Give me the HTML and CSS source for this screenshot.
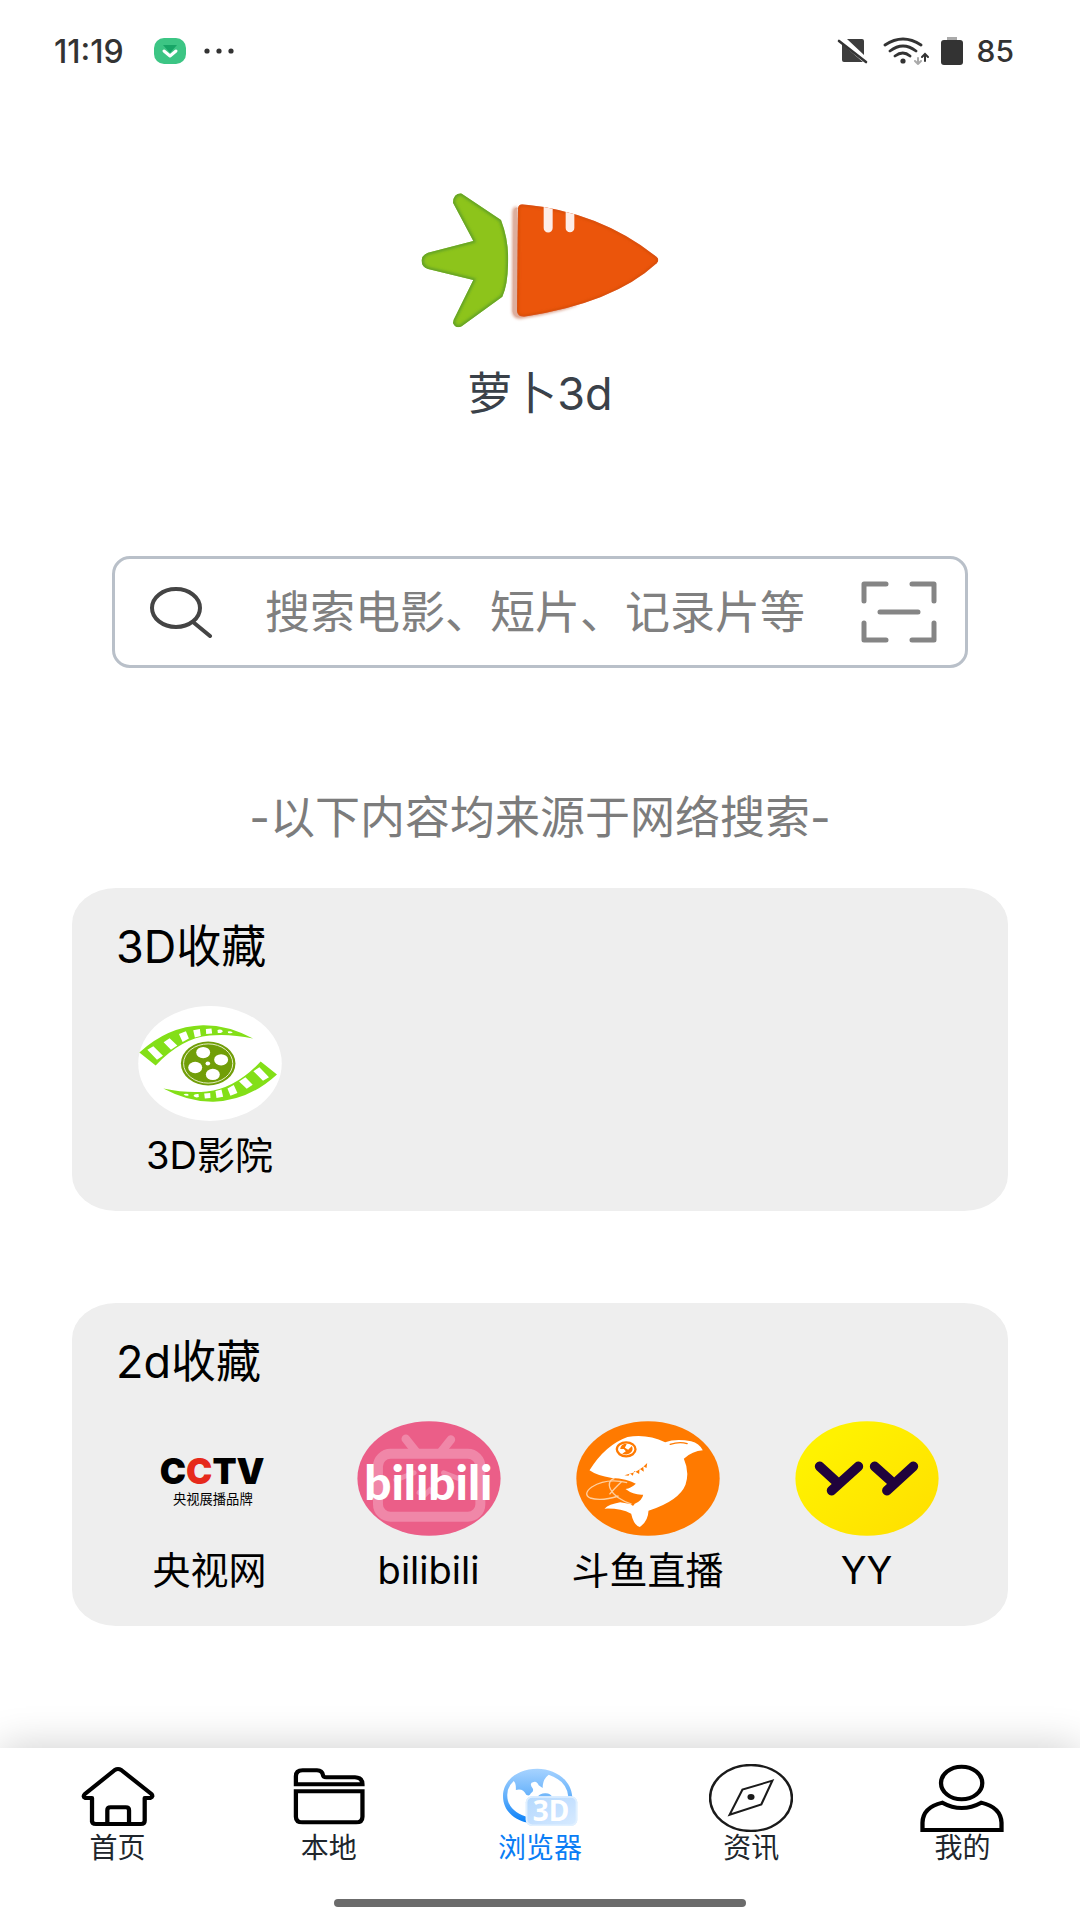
FILE: index.html
```html
<!DOCTYPE html>
<html lang="zh-CN">
<head>
  <meta charset="UTF-8" />
  <meta name="viewport" content="width=device-width, initial-scale=1.0"/>
  <title>萝卜3d</title>
  <link rel="stylesheet" href="styles.css">
</head>
<body>
  <header class="status-bar">
    <span class="clock">11:19</span>
    <svg class="msg-icon" width="32" height="26" viewBox="0 0 32 26" aria-hidden="true">
      <rect width="32" height="26" rx="10" fill="#3cc584"/>
      <path d="M9 7h14l-7 8z" fill="#17a566"/>
      <path d="M10 13l6 5 6-5" fill="none" stroke="#fff" stroke-width="3" stroke-linecap="round" stroke-linejoin="round"/>
    </svg>
    <svg class="dots-icon" width="30" height="6" viewBox="0 0 30 6" fill="#333" aria-hidden="true">
      <circle cx="3" cy="3" r="2.6"/><circle cx="15" cy="3" r="2.6"/><circle cx="27" cy="3" r="2.6"/>
    </svg>
    <div class="status-right">
      <svg width="32" height="26" viewBox="0 0 32 26" aria-hidden="true">
        <path d="M10 1h15a2 2 0 0 1 2 2v14zM5 6l21 18H7a2 2 0 0 1-2-2z" fill="#3d3d3d"/>
        <path d="M2 3l27 21" stroke="#333" stroke-width="2.6" stroke-linecap="round"/>
      </svg>
      <svg class="wifi-icon" width="48" height="28" viewBox="0 0 48 28" fill="none" stroke="#333" stroke-width="2.8" stroke-linecap="round" aria-hidden="true">
        <path d="M2 8Q20-4 38 8M7 14Q20 4 33 14M12 19Q20 13 27 19"/>
        <circle cx="20" cy="24" r="2.6" fill="#333" stroke="none"/>
        <path d="M35 21v6M32 24l3 3 3-3" stroke="#aaa" stroke-width="2"/>
        <path d="M42 24v-6M39 20l3-3 3 3" stroke-width="2"/>
      </svg>
      <svg class="battery-icon" width="22" height="28" viewBox="0 0 22 28" aria-hidden="true">
        <path d="M6 0h10v4H6z" fill="#aaa"/>
        <rect y="3" width="22" height="25" rx="3" fill="#333"/>
      </svg>
      <span>85</span>
    </div>
  </header>

  <main>
    <section class="brand">
      <svg width="240" height="140" viewBox="60 60 720 420" aria-hidden="true">
        <defs>
          <filter id="soft" x="-10%" y="-10%" width="120%" height="120%"><feGaussianBlur stdDeviation="4"/></filter>
          <clipPath id="leafClip"><path d="M183 70L303 150Q328 215 324 285Q323 345 307 380L185 469Q168 478 159 459L161 449L220 330L84 297Q64 290 65 270Q67 254 84 248L220 213L159 98Q160 71 183 70Z"/></clipPath>
          <clipPath id="rootClip"><path d="M367 103Q600 125 770 261Q780 270 770 280Q640 400 372 440Q352 440 351 423L354 115Q356 103 367 103Z"/></clipPath>
        </defs>
        <g clip-path="url(#leafClip)">
          <path d="M60 60h280v420H60z" fill="#8dc41b"/>
          <path d="M183 70L303 150Q328 215 324 285Q323 345 307 380L185 469Q168 478 159 459L161 449L220 330L84 297Q64 290 65 270Q67 254 84 248L220 213L159 98Q160 71 183 70Z" fill="none" stroke="#5d9d26" stroke-width="11" filter="url(#soft)"/>
        </g>
        <path d="M350 109Q336 112 337 130L336 425Q339 447 361 446Q480 428 540 403L360 420Z" fill="#d9a08c" filter="url(#soft)"/>
        <path d="M352 112Q341 114 342 130L338 425Q341 440 360 441Z" fill="#dcae9e"/>
        <g clip-path="url(#rootClip)">
          <path d="M340 90h450v360H340z" fill="#eb550b"/>
          <path d="M367 103Q600 125 770 261Q780 270 770 280Q640 400 372 440Q352 440 351 423L354 115Q356 103 367 103Z" fill="none" stroke="#cc4a0d" stroke-width="7" filter="url(#soft)"/>
          <path d="M431 90v84a13 13 0 0 0 27 0V90zM497 90v84a13 13 0 0 0 26 0V90z" fill="#fdede8"/>
        </g>
      </svg>
      <h1>萝卜3d</h1>
    </section>

    <form class="search" role="search">
      <button type="submit" aria-label="搜索">
        <svg width="64" height="52" viewBox="0 0 64 52" fill="none" stroke="#444" stroke-width="4" stroke-linecap="round" aria-hidden="true">
          <ellipse cx="27" cy="22" rx="24" ry="19"/>
          <path d="M44 36l17 14"/>
        </svg>
      </button>
      <input type="text" aria-label="搜索内容" placeholder="搜索电影、短片、记录片等">
      <button type="button" aria-label="扫一扫">
        <svg width="76" height="62" viewBox="0 0 76 62" fill="none" stroke="#858585" stroke-width="5" stroke-linecap="round" stroke-linejoin="round" aria-hidden="true">
          <path d="M3 20V3h22M51 3h22v17M3 42v17h22M51 59h22V42M19 31h38" />
        </svg>
      </button>
    </form>

    <p class="notice">-以下内容均来源于网络搜索-</p>

    <section class="card">
      <h2>3D收藏</h2>
      <div class="sites">
        <a href="#">
          <svg width="144" height="115" viewBox="235 379 433 346" aria-hidden="true">
            <ellipse cx="451.500" cy="552" rx="216" ry="173" fill="#fff"/>
            <g id="film">
              <path d="M239 519Q325 440 430 437Q505 436 581 477Q510 462 450 468Q365 476 288 558Z" fill="#83df17"/>
              <path d="M263 511l18-11 29 29-18 12zM312 488l18-12 23 22-19 13zM358 463l21-8 9 22-19 10zM401 452l20-4 3 21-18 5zM439 448l17-1 2 15-18 1zM474 451q10-3 16 3q-1 7-15 6zM505 456q8-3 15 3q-5 4-14 1z" fill="#fff"/>
            </g>
            <use href="#film" transform="rotate(180 446 552)"/>
            <ellipse cx="446" cy="552" rx="82" ry="66" fill="#719e08"/>
            <ellipse cx="446" cy="552" rx="74" ry="59" fill="#719e08" stroke="#e6efc9" stroke-width="3"/>
            <g fill="#fff">
              <ellipse cx="431" cy="519" rx="21" ry="17"/><ellipse cx="485" cy="541" rx="21" ry="17"/>
              <ellipse cx="407" cy="564" rx="21" ry="17"/><ellipse cx="460" cy="585" rx="21" ry="17"/>
              <ellipse cx="445" cy="552" rx="7" ry="6"/>
            </g>
          </svg>
          <span>3D影院</span>
        </a>
      </div>
    </section>

    <section class="card">
      <h2>2d收藏</h2>
      <div class="sites">
        <a href="#">
          <svg width="144" height="115" viewBox="245 395 433 346" aria-hidden="true">
            <text class="cctv" x="468" y="586">C<tspan fill="#e62a1c">C</tspan>TV</text>
            <text class="cctv-sub" x="470" y="646">央视展播品牌</text>
          </svg>
          <span>央视网</span>
        </a>
        <a href="#">
          <svg width="144" height="115" viewBox="43 64 434 347" aria-hidden="true">
            <ellipse cx="260" cy="237.500" rx="216" ry="173" fill="#eb5e88"/>
            <g fill="none" stroke="#f087a8" stroke-linecap="round">
              <path d="M190 118l30 38M326 120l-30 38" stroke-width="26"/>
              <rect x="106" y="163" width="309" height="190" rx="38" stroke-width="30"/>
              <path d="M160 242l55-22M304 220l56 22M230 280l16 8 16-16 14 14" stroke-width="15"/>
            </g>
            <text class="bili" x="258" y="303">bilibili</text>
          </svg>
          <span>bilibili</span>
        </a>
        <a href="#">
          <svg width="144" height="115" viewBox="73 65 431 345" aria-hidden="true">
            <ellipse cx="288.500" cy="237.500" rx="215" ry="172" fill="#ff7a00"/>
            <path d="M113 213Q160 137 227 113Q285 102 340 129Q372 116 418 126Q442 132 453 153Q422 155 396 178Q414 218 401 256Q382 304 290 334Q289 365 264 383Q246 378 238 343Q205 326 158 328Q171 315 205 309Q227 314 246 315Q272 303 274 286Q246 288 221 269Q238 266 252 253Q225 238 180 236Q135 229 113 213Z" fill="#fff"/>
            <path d="M355 135Q383 126 406 133" fill="none" stroke="#ff7a00" stroke-width="4" stroke-linecap="round"/>
            <ellipse cx="223" cy="150" rx="28" ry="21" fill="none" stroke="#ff7a00" stroke-width="7"/>
            <path d="M205 149Q207 133 225 133L219 145L229 151L240 140Q247 153 234 162Q226 168 211 163L222 156L216 149Z" fill="#ff7a00"/>
            <path d="M218 228Q263 218 286 191L284 206L274 201L276 217L263 208L262 224L247 215L243 229L234 222L230 229Z" fill="#ff7a00"/>
            <g fill="none" stroke="#ffd0a0" stroke-width="4">
              <path d="M226 250Q165 235 120 263Q92 284 115 296Q148 307 200 290"/>
              <path d="M188 237Q165 245 176 270Q190 299 243 316M209 247Q185 270 173 285"/>
            </g>
            <circle cx="243" cy="315" r="4" fill="#ff7a00"/>
          </svg>
          <span>斗鱼直播</span>
        </a>
        <a href="#">
          <svg width="144" height="115" viewBox="43 64 434 347" aria-hidden="true">
            <defs><linearGradient id="sun" x1="0" y1="0" x2="1" y2="1"><stop offset=".2" stop-color="#fff200"/><stop offset="1" stop-color="#ffde00"/></linearGradient></defs>
            <ellipse cx="260" cy="237.500" rx="216" ry="173" fill="url(#sun)"/>
            <path d="M117 201l47 43M234 201l-81 73M283 201l48 43M400 201l-80 73" stroke="#20033c" stroke-width="29" stroke-linecap="round"/>
          </svg>
          <span>YY</span>
        </a>
      </div>
    </section>
  </main>

  <footer>
    <nav>
      <a href="#">
        <svg width="84" height="68" viewBox="97 100 236 204" preserveAspectRatio="none" fill="none" stroke="#000" stroke-width="12" stroke-linejoin="round" aria-hidden="true">
          <path d="M142 275V202H123Q115 198 122 190L206 118Q215 112 224 118L309 190Q315 198 306 202H290V270Q290 280 279 280H153Q142 280 142 270M185 280V239Q185 230 194 230H237Q246 230 246 239V280"/>
        </svg>
        <span>首页</span>
      </a>
      <a href="#">
        <svg width="84" height="68" viewBox="689 100 236 204" preserveAspectRatio="none" fill="none" stroke="#000" stroke-width="12" aria-hidden="true">
          <path d="M714 161V137Q714 119 733 119H773Q788 120 790 133Q791 140 799 140H880Q901 141 901 161ZM714 182H901V258Q901 275 883 275H733Q714 275 714 258Z"/>
        </svg>
        <span>本地</span>
      </a>
      <a href="#" class="active" aria-current="page">
        <svg width="84" height="68" viewBox="0 0 84 68" aria-hidden="true">
          <defs>
            <linearGradient id="sky" x1="0" y1="0" x2="0" y2="1"><stop offset="0" stop-color="#a7d3ff"/><stop offset=".5" stop-color="#67b2fb"/><stop offset="1" stop-color="#087ff8"/></linearGradient>
            <linearGradient id="badge" x1="0" y1="0" x2="1" y2="1"><stop offset="0" stop-color="#b5d9fd"/><stop offset=".5" stop-color="#c4e0ff"/><stop offset="1" stop-color="#d8ebff"/></linearGradient>
          </defs>
          <g transform="scale(.357 .333) translate(-1282 -100)">
            <path d="M1392 114C1338 114 1296 149 1296 196C1296 239 1326 268 1364 276L1360 258C1325 246 1307 222 1308 192Q1309 167 1326 151Q1333 158 1332 178Q1352 172 1361 192Q1371 198 1374 188Q1386 180 1376 168Q1370 156 1382 154Q1391 151 1396 164L1407 172Q1407 145 1424 132Q1475 151 1479 198H1490C1487 148 1442 114 1392 114Z" fill="url(#sky)"/>
            <path d="M1393 199Q1400 187 1416 188Q1429 189 1434 199Z" fill="#74b8fa"/>
            <rect x="1360" y="197" width="144" height="89" rx="18" fill="url(#badge)"/>
            <rect x="1362" y="199" width="140" height="85" rx="16" fill="none" stroke="#e0f0ff" stroke-width="5"/>
          </g>
          <text class="badge-text" x="53" y="57">3D</text>
        </svg>
        <span>浏览器</span>
      </a>
      <a href="#">
        <svg width="84" height="68" viewBox="642 100 236 204" preserveAspectRatio="none" fill="none" stroke="#1a1a1a" stroke-width="6" aria-hidden="true">
          <ellipse cx="760" cy="202" rx="115" ry="99" stroke-width="7"/>
          <path d="M820 150L736 177L700 252L789 221Z"/>
          <ellipse cx="760" cy="199" rx="10" ry="9" fill="#1a1a1a" stroke="none"/>
        </svg>
        <span>资讯</span>
      </a>
      <a href="#">
        <svg width="84" height="68" viewBox="1234 100 236 204" preserveAspectRatio="none" fill="none" stroke="#000" stroke-width="12" aria-hidden="true">
          <ellipse cx="1351" cy="157" rx="58" ry="49"/>
          <path d="M1241 298V276Q1242 230 1297 216Q1351 248 1406 216Q1461 230 1463 276V298Z"/>
        </svg>
        <span>我的</span>
      </a>
    </nav>
    <div class="home-bar"></div>
  </footer>
</body>
</html>
```
FILE: styles.css
```css
* {
  box-sizing: border-box;
}

body {
  font-family: Inter, "Noto Sans CJK SC", sans-serif;
  margin: 0;
  min-height: 100vh;
  display: flex;
  flex-direction: column;
  background: #fff;
  color: #000;
}

h1, h2, p {
  margin: 0;
  font-weight: 400;
  line-height: 60px;
}

a {
  color: inherit;
  text-decoration: none;
}

svg {
  display: block;
  flex-shrink: 0;
}

.status-bar {
  display: flex;
  align-items: center;
  height: 102px;
  padding: 0 66px 0 54px;
  color: #333;
  font-size: 30px;
  font-weight: 500;
}

.clock {
  font-size: 32px;
}

.msg-icon {
  margin-left: 30px;
}

.dots-icon {
  margin-left: 18px;
}

.status-right {
  display: flex;
  align-items: center;
  margin-left: auto;
}

.wifi-icon {
  margin-left: 14px;
}

.battery-icon {
  margin: 0 14px 0 10px;
}

.brand {
  display: flex;
  flex-direction: column;
  align-items: center;
  gap: 34px;
  padding-top: 88px;
  color: #3a4149;
}

.brand h1 {
  font-size: 45px;
}

.search {
  display: flex;
  align-items: center;
  height: 112px;
  margin: 132px 112px 0;
  padding: 0 28px 0 34px;
  border: 3px solid #b9c0c9;
  border-radius: 18px;
}

.search button {
  padding: 0;
  border: none;
  background: none;
  cursor: pointer;
}

.search input {
  flex: 1;
  min-width: 0;
  margin: 0 10px 0 52px;
  padding: 0;
  border: none;
  outline: none;
  background: none;
  font-family: inherit;
  font-size: 45px;
}

.search input::placeholder {
  color: #808080;
  opacity: 1;
}

.notice {
  margin-top: 120px;
  color: #7c7c7c;
  font-size: 45px;
  text-align: center;
}

.card {
  margin: 92px 72px 0;
  padding: 29px 32px 31px 28px;
  border-radius: 44px / 36px;
  background: #eee;
}

.notice + .card {
  margin-top: 40px;
}

.card h2 {
  margin-left: 16px;
  font-size: 45px;
}

.sites {
  display: grid;
  grid-template-columns: repeat(4, 1fr);
  margin-top: 29px;
}

.sites a {
  display: flex;
  flex-direction: column;
  align-items: center;
  gap: 9px;
  font-size: 38px;
  line-height: 50px;
}

.cctv {
  font-size: 106px;
  font-weight: 900;
  text-anchor: middle;
}

.cctv-sub {
  font-family: "Noto Sans CJK SC", sans-serif;
  font-size: 40px;
  text-anchor: middle;
}

.bili {
  fill: #fff;
  font-family: Lato, sans-serif;
  font-size: 144px;
  font-weight: 900;
  text-anchor: middle;
}

footer {
  margin-top: auto;
  padding: 16px 12px 13px;
  background: #fff;
  box-shadow: 0 0 40px rgba(0, 0, 0, 0.2);
}

nav {
  display: grid;
  grid-template-columns: repeat(5, 1fr);
}

nav a {
  display: flex;
  flex-direction: column;
  align-items: center;
  color: #20262c;
  font-size: 28px;
  line-height: 32px;
}

nav .active {
  color: #0a7df5;
}

.badge-text {
  fill: #fff;
  font-family: "Noto Sans", sans-serif;
  font-size: 28px;
  font-weight: 700;
  text-anchor: middle;
}

.home-bar {
  width: 39%;
  height: 8px;
  margin: 35px auto 0;
  border-radius: 4px;
  background: #6b6b6b;
}
```
